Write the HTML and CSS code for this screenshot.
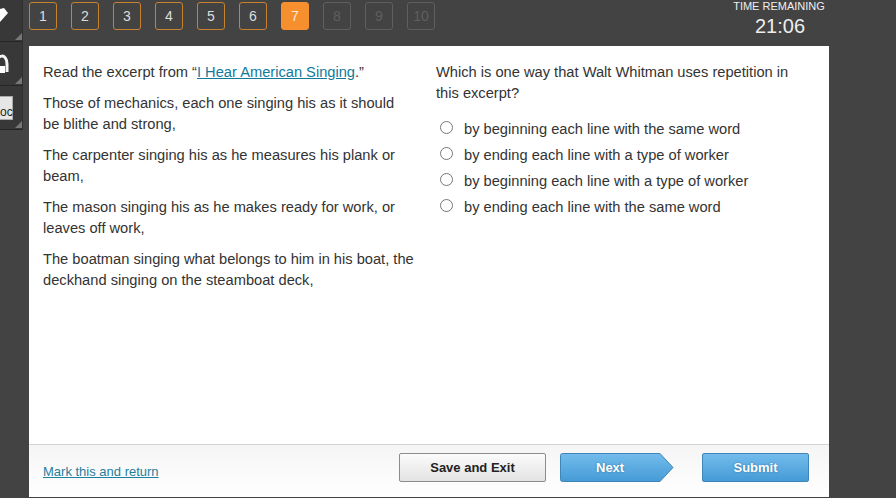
FILE: index.html
```html
<!DOCTYPE html>
<html lang="en">
<head>
  <meta charset="UTF-8">
  <title>Assignment</title>
  <link rel="stylesheet" href="styles.css">
</head>
<body>
  <div class="side">
    <div class="tool tool-first">
      <svg class="pencil" width="12" height="16" viewBox="0 0 12 16"><path d="M0 15 L8 6 L4 1 L0 2 Z" fill="#fff"/></svg>
    </div>
    <div class="tool">
      <svg class="phones" width="12" height="22" viewBox="0 0 12 22"><path d="M-4 13 C-4 -1 7 -1 7 10 V18" fill="none" stroke="#f4f4f4" stroke-width="3"/><rect x="0" y="12" width="5" height="7" fill="#fff"/></svg>
    </div>
    <div class="tool">
      <svg class="doc" width="14" height="25" viewBox="0 0 14 25"><rect x="-3" y=".5" width="15.5" height="23" fill="#e6e6e6" stroke="#aaa"/><text x="0" y="20" class="doc-text">oc</text></svg>
    </div>
  </div>

  <div class="page">
    <div class="top">
      <div class="nums">
        <span class="num">1</span>
        <span class="num">2</span>
        <span class="num">3</span>
        <span class="num">4</span>
        <span class="num">5</span>
        <span class="num">6</span>
        <span class="num current">7</span>
        <span class="num off">8</span>
        <span class="num off">9</span>
        <span class="num off">10</span>
      </div>
      <div class="timer">
        <div class="timer-label">TIME REMAINING</div>
        <div class="timer-value">21:06</div>
      </div>
    </div>

    <div class="panel">
      <div class="content">
        <div class="col-left">
          <p>Read the excerpt from “<a href="#">I Hear American Singing</a>.”</p>
          <p>Those of mechanics, each one singing his as it should<br>be blithe and strong,</p>
          <p>The carpenter singing his as he measures his plank or beam,</p>
          <p>The mason singing his as he makes ready for work, or leaves off work,</p>
          <p>The boatman singing what belongs to him in his boat, the deckhand singing on the steamboat deck,</p>
        </div>
        <div class="col-right">
          <p>Which is one way that Walt Whitman uses repetition in this excerpt?</p>
          <label class="choice"><input type="radio" name="answer"><span>by beginning each line with the same word</span></label>
          <label class="choice"><input type="radio" name="answer"><span>by ending each line with a type of worker</span></label>
          <label class="choice"><input type="radio" name="answer"><span>by beginning each line with a type of worker</span></label>
          <label class="choice"><input type="radio" name="answer"><span>by ending each line with the same word</span></label>
        </div>
      </div>
      <div class="footer">
        <a class="mark" href="#">Mark this and return</a>
        <button class="btn save">Save and Exit</button>
        <div class="next-wrap">
          <svg class="next-shape" width="114" height="29" viewBox="0 0 114 29">
            <defs>
              <linearGradient id="blue" x1="0" y1="0" x2="0" y2="1">
                <stop offset="0" stop-color="#73bcec"/>
                <stop offset="1" stop-color="#459bd6"/>
              </linearGradient>
            </defs>
            <path d="M2.5 .5 H100 L113 14.5 L100 28.5 H2.5 Q.5 28.5 .5 26.5 V2.5 Q.5 .5 2.5 .5 Z" fill="url(#blue)" stroke="#3f86b8"/>
          </svg>
          <span class="next-label">Next</span>
        </div>
        <button class="btn submit">Submit</button>
      </div>
    </div>
  </div>
</body>
</html>
```

FILE: styles.css
```css
html, body {
  height: 100%;
}

body {
  margin: 0;
  overflow: hidden;
  display: flex;
  background-color: #434343;
  font-family: "Liberation Sans", Arial, sans-serif;
  color: #333;
}

.side {
  width: 29px;
  flex-shrink: 0;
}

.tool {
  position: relative;
  width: 22px;
  height: 43px;
  background-color: #383838;
  border-bottom: 1px solid #262626;
  border-right: 1px solid #303030;
  overflow: hidden;
}

.tool-first {
  height: 41px;
}

.tool svg {
  display: block;
}

.tool::after {
  content: "";
  position: absolute;
  right: 0;
  bottom: 1px;
  border-style: solid;
  border-width: 0 0 7px 7px;
  border-color: transparent transparent #777 transparent;
}

.pencil {
  margin-top: 7px;
}

.phones {
  margin-top: 12px;
}

.doc {
  margin-top: 10px;
}

.doc-text {
  font-family: "Liberation Sans", Arial, sans-serif;
  font-size: 12px;
  fill: #222;
}

.page {
  width: 800px;
  display: flex;
  flex-direction: column;
}

.top {
  height: 46px;
  display: flex;
  justify-content: space-between;
}

.nums {
  display: flex;
  gap: 14px;
  padding-top: 2px;
}

.num {
  width: 28px;
  height: 28px;
  box-sizing: border-box;
  border: 1px solid #c8822f;
  border-radius: 3px;
  color: #ddd;
  font-size: 14px;
  display: flex;
  align-items: center;
  justify-content: center;
}

.num.current {
  background-color: #f68f2e;
  border-color: #f68f2e;
  color: #ffe9d2;
}

.num.off {
  border-color: #5f5f5f;
  color: #5f5f5f;
}

.timer {
  width: 110px;
  text-align: center;
  color: #eee;
  margin-right: -6px;
}

.timer-label {
  font-size: 11px;
  line-height: 12px;
  padding-right: 2px;
}

.timer-value {
  font-size: 20px;
  line-height: 26px;
  margin-top: 1px;
}

.panel {
  height: 451px;
  background: #fff;
  display: flex;
  flex-direction: column;
}

.content {
  flex: 1;
  display: flex;
  padding: 16px 14px 0;
  font-size: 14.67px;
  line-height: 21px;
}

.content p {
  margin: 0 0 10px;
}

.content a {
  color: #0f7a9c;
}

.col-left {
  width: 375px;
}

.col-right {
  width: 360px;
  margin-left: 18px;
}

.col-right p {
  margin-bottom: 12px;
}

.choice {
  display: flex;
  align-items: center;
  height: 26px;
}

.choice input {
  width: 13px;
  height: 13px;
  margin: 0 11px 0 4px;
  position: relative;
  top: -2px;
}

.footer {
  height: 53px;
  box-sizing: border-box;
  border-top: 1px solid #d4d4d4;
  background: linear-gradient(#f5f5f5, #fff);
  display: flex;
  align-items: center;
  padding: 0 20px 7px 14px;
}

.mark {
  font-size: 13px;
  color: #1f7f9e;
  margin-right: auto;
  margin-top: 7px;
}

.btn {
  font-family: "Liberation Sans", Arial, sans-serif;
  font-size: 13px;
  font-weight: bold;
  height: 29px;
  border-radius: 2px;
  padding: 0;
  cursor: pointer;
}

.save {
  width: 147px;
  color: #222;
  background: linear-gradient(#fbfbfb, #e3e3e3);
  border: 1px solid #8c8c8c;
  margin-right: 14px;
}

.next-wrap {
  position: relative;
  width: 114px;
  height: 29px;
  margin-right: 28px;
}

.next-shape {
  display: block;
}

.next-label {
  position: absolute;
  left: 36px;
  top: 7px;
  font-size: 13px;
  font-weight: bold;
  color: #fff;
  text-shadow: 0 0 2px #2e6f9e;
}

.submit {
  width: 107px;
  color: #fff;
  text-shadow: 0 0 2px #2e6f9e;
  background: linear-gradient(#73bcec, #459bd6);
  border: 1px solid #3f86b8;
}
```
